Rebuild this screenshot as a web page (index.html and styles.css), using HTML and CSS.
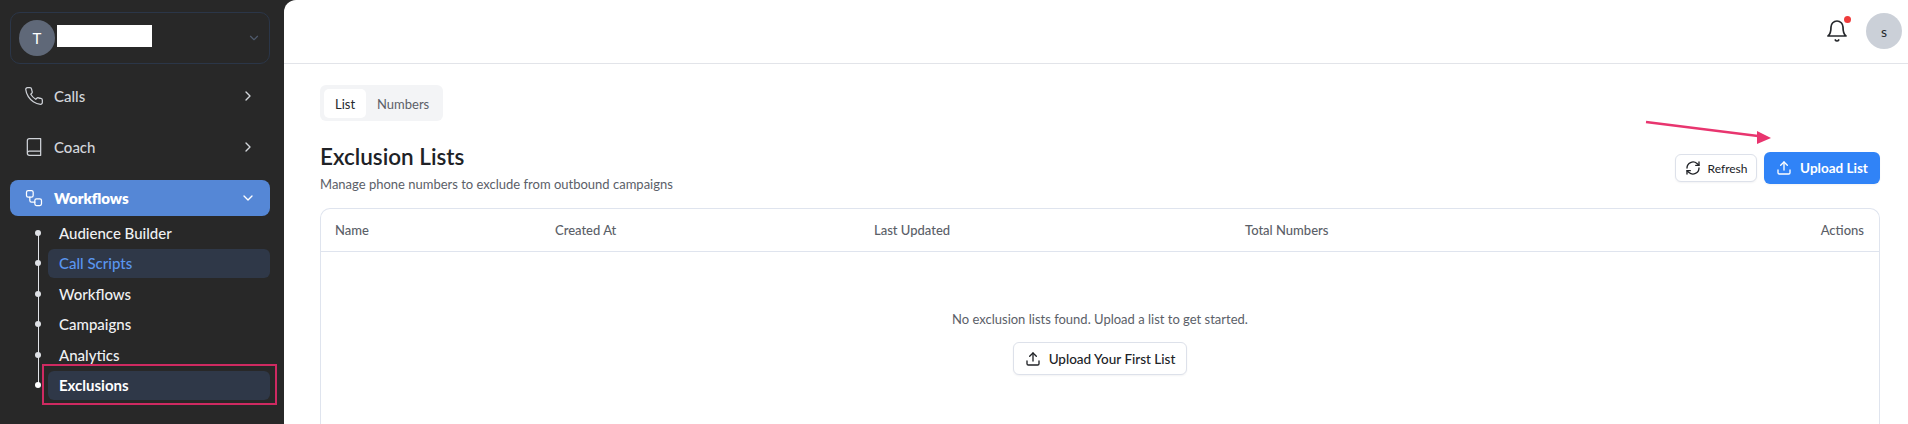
FILE: index.html
```html
<!DOCTYPE html>
<html lang="en">
<head>
<meta charset="utf-8">
<title>Exclusion Lists</title>
<link rel="stylesheet" href="styles.css">
</head>
<body>
<div class="app">
  <aside class="sidebar">
    <div class="switcher">
      <span class="org-avatar">T</span>
      <span class="redacted"></span>
      <svg class="switch-chev" viewBox="0 0 24 24"><path d="m6 9 6 6 6-6"/></svg>
    </div>
    <nav class="nav">
      <div class="nav-item">
        <svg class="nav-icon" viewBox="0 0 24 24"><path d="M22 16.92v3a2 2 0 0 1-2.18 2 19.79 19.79 0 0 1-8.63-3.07 19.5 19.5 0 0 1-6-6 19.79 19.79 0 0 1-3.07-8.67A2 2 0 0 1 4.11 2h3a2 2 0 0 1 2 1.72c.13.96.36 1.9.7 2.81a2 2 0 0 1-.45 2.11L8.09 9.91a16 16 0 0 0 6 6l1.27-1.27a2 2 0 0 1 2.11-.45c.91.34 1.85.57 2.81.7A2 2 0 0 1 22 16.92z"/></svg>
        <span class="nav-label">Calls</span>
        <svg class="nav-chev" viewBox="0 0 24 24"><path d="m9 6 6 6-6 6"/></svg>
      </div>
      <div class="nav-item">
        <svg class="nav-icon" viewBox="0 0 24 24"><path d="M4 19.5v-15A2.5 2.5 0 0 1 6.5 2H20v20H6.5a2.5 2.5 0 0 1 0-5H20"/></svg>
        <span class="nav-label">Coach</span>
        <svg class="nav-chev" viewBox="0 0 24 24"><path d="m9 6 6 6-6 6"/></svg>
      </div>
      <div class="nav-item nav-open">
        <svg class="nav-icon" viewBox="0 0 24 24"><rect x="3" y="3" width="8" height="8" rx="2"/><rect x="13" y="13" width="8" height="8" rx="2"/><path d="M7 11v4a2 2 0 0 0 2 2h4"/></svg>
        <span class="nav-label">Workflows</span>
        <svg class="nav-chev" viewBox="0 0 24 24"><path d="m6 9 6 6 6-6"/></svg>
      </div>
      <ul class="subnav">
        <li class="sub-item">Audience Builder</li>
        <li class="sub-item sub-link">Call Scripts</li>
        <li class="sub-item">Workflows</li>
        <li class="sub-item">Campaigns</li>
        <li class="sub-item">Analytics</li>
        <li class="sub-item sub-current">Exclusions<span class="callout"></span></li>
      </ul>
    </nav>
  </aside>
  <main class="main">
    <header class="topbar">
      <span class="bell">
        <svg viewBox="0 0 24 24"><path d="M6 8a6 6 0 0 1 12 0c0 7 3 9 3 9H3s3-2 3-9"/><path d="M10.3 21a1.94 1.94 0 0 0 3.4 0"/></svg>
        <span class="bell-dot"></span>
      </span>
      <span class="user-avatar">s</span>
    </header>
    <section class="content">
      <div class="tabs">
        <span class="tab tab-active">List</span>
        <span class="tab">Numbers</span>
      </div>
      <div class="page-head">
        <div>
          <h1 class="title">Exclusion Lists</h1>
          <p class="subtitle">Manage phone numbers to exclude from outbound campaigns</p>
        </div>
        <div class="actions">
          <svg class="arrow" viewBox="0 0 130 26"><path class="arrow-line" d="M1 2 113 16"/><path class="arrow-head" d="M126 18 112 11 112 24z"/></svg>
          <button class="btn btn-small">
            <svg class="btn-icon" viewBox="0 0 24 24"><path d="M3 12a9 9 0 0 1 15-6.7L21 8"/><path d="M21 3v5h-5"/><path d="M21 12a9 9 0 0 1-15 6.7L3 16"/><path d="M8 16H3v5"/></svg>
            Refresh
          </button>
          <button class="btn btn-primary">
            <svg class="btn-icon" viewBox="0 0 24 24"><path d="M21 15v4a2 2 0 0 1-2 2H5a2 2 0 0 1-2-2v-4"/><path d="m17 8-5-5-5 5"/><path d="M12 3v12"/></svg>
            Upload List
          </button>
        </div>
      </div>
      <div class="table">
        <div class="table-head">
          <span>Name</span>
          <span>Created At</span>
          <span>Last Updated</span>
          <span>Total Numbers</span>
          <span>Actions</span>
        </div>
        <div class="empty">
          <p class="empty-text">No exclusion lists found. Upload a list to get started.</p>
          <button class="btn btn-outline">
            <svg class="btn-icon" viewBox="0 0 24 24"><path d="M21 15v4a2 2 0 0 1-2 2H5a2 2 0 0 1-2-2v-4"/><path d="m17 8-5-5-5 5"/><path d="M12 3v12"/></svg>
            Upload Your First List
          </button>
        </div>
      </div>
    </section>
  </main>
</div>
</body>
</html>
```

FILE: styles.css
```css
* { box-sizing: border-box; }
html, body { margin: 0; height: 424px; overflow: hidden; }
body { font-family: Lato, "Noto Sans", sans-serif; background: #282828; color: #1f2023; }

.app { display: flex; height: 424px; overflow: hidden; }

.sidebar { width: 284px; flex: none; padding: 12px 14px 0 10px; background: #282828; }

.switcher {
  display: flex; align-items: center; height: 52px; padding: 0 8px;
  border: 1px solid #2b3648; border-radius: 10px;
}
.org-avatar {
  width: 36px; height: 36px; flex: none; display: flex; align-items: center; justify-content: center;
  border-radius: 50%; background: #5f6878; color: #fff; font-size: 15px;
}
.redacted { width: 95px; height: 22px; margin: -4px 0 0 2px; background: #fff; }
.switch-chev { width: 14px; height: 14px; margin-left: auto; fill: none; stroke: #4f5a6c; stroke-width: 2; stroke-linecap: round; stroke-linejoin: round; }

.nav { display: flex; flex-direction: column; margin-top: 13.5px; }
.nav-item {
  display: flex; align-items: center; height: 36px; padding: 0 14px; margin-bottom: 15px;
  border-radius: 8px; color: #d3d6db; font-size: 15px; font-weight: 500;
}
.nav-icon { width: 20px; height: 20px; flex: none; fill: none; stroke: #cfd2d8; stroke-width: 1.5; stroke-linecap: round; stroke-linejoin: round; }
.nav-label { margin-left: 10px; }
.nav-chev { width: 16px; height: 16px; margin-left: auto; fill: none; stroke: #d3d6db; stroke-width: 2; stroke-linecap: round; stroke-linejoin: round; }
.nav-open { margin-bottom: 1px; background: #5587d6; color: #fff; font-weight: 800; }
.nav-open .nav-icon, .nav-open .nav-chev { stroke: #fff; }

.subnav { position: relative; list-style: none; margin: 0; padding: 1.5px 0 0 38px; }
.subnav::before { content: ""; position: absolute; left: 27.5px; top: 16px; height: 150px; width: 1px; background: #e2e4e8; }
.sub-item {
  position: relative; height: 29px; display: flex; align-items: center; margin-bottom: 1.5px; padding-left: 11px;
  border-radius: 6px; color: #f0f1f3; font-size: 15px; font-weight: 500;
}
.sub-item::before {
  content: ""; position: absolute; left: -13px; top: 11.5px; width: 6px; height: 6px; border-radius: 50%; background: #dfe1e5;
}
.sub-link { background: #2f3848; color: #5a96ef; }
.sub-current { background: #2f3848; color: #fff; font-weight: 700; }
.sub-current::before { background: #fff; }
.callout { position: absolute; left: -6px; top: -6.5px; width: 235px; height: 41px; border: 2.5px solid #cf2a61; }

.main { flex: 1; min-width: 0; height: 424px; background: #fff; border-top-left-radius: 12px; overflow: hidden; }

.topbar {
  display: flex; align-items: center; justify-content: flex-end; gap: 17px; height: 64px; padding: 0 6px 1px 0;
  border-bottom: 1px solid #e2e4e9;
}
.bell { position: relative; width: 24px; height: 24px; }
.bell svg { width: 24px; height: 24px; display: block; fill: none; stroke: #26282c; stroke-width: 1.7; stroke-linecap: round; stroke-linejoin: round; }
.bell-dot { position: absolute; left: 18.5px; top: -3.5px; width: 7px; height: 7px; border-radius: 50%; background: #ef3b3b; }
.user-avatar { width: 36px; height: 36px; display: flex; align-items: center; justify-content: center; border-radius: 50%; background: #cbd0d8; color: #26282c; font-size: 14px; }

.content { padding: 21px 28px 0 36px; }

.tabs { display: flex; width: 123px; height: 36px; padding: 4px; border-radius: 6px; background: #f3f4f6; }
.tab { display: flex; align-items: center; height: 29px; padding: 0 11px; border-radius: 5px; color: #5b6068; font-size: 13px; }
.tab-active { width: 42px; background: #fff; color: #26282c; }

.page-head { display: flex; justify-content: space-between; align-items: flex-start; height: 67px; margin-top: 20px; }
.title { margin: 0; font-size: 22.5px; line-height: 31px; font-weight: 600; color: #202226; }
.subtitle { margin: 2px 0 0; font-size: 13px; line-height: 20px; color: #5b6068; }

.actions { position: relative; display: flex; align-items: center; gap: 7px; margin-top: 11px; }
.arrow { position: absolute; left: -30px; top: -32px; width: 130px; height: 26px; }
.arrow-line { fill: none; stroke: #e8356f; stroke-width: 2.4; }
.arrow-head { fill: #e8356f; }

.btn {
  display: inline-flex; align-items: center; justify-content: center; border-radius: 6px; border: 1px solid #dde1ea;
  background: #fff; color: #202226; font-family: inherit; font-size: 13.5px; font-weight: 500; box-shadow: 0 1px 2px rgba(16,24,40,.05);
}
.btn-icon { flex: none; width: 16px; height: 16px; fill: none; stroke: currentColor; stroke-width: 2; stroke-linecap: round; stroke-linejoin: round; }
.btn-small { width: 82px; height: 28px; gap: 7px; font-size: 12px; font-weight: 400; }
.btn-primary { width: 116px; height: 32px; gap: 8px; border: 0; background: #3083f7; color: #fff; font-size: 13.5px; font-weight: 700; }
.btn-outline { width: 174px; height: 33px; gap: 8px; }

.table { height: 216px; border: 1px solid #dfe4ee; border-bottom: 0; border-radius: 10px 10px 0 0; }
.table-head {
  display: grid; grid-template-columns: 220px 319px 371px 1fr auto; align-items: center; height: 43px; padding: 0 15px 0 14px;
  border-bottom: 1px solid #dfe4ee; color: #5b6068; font-size: 13px; font-weight: 500;
}
.empty { display: flex; flex-direction: column; align-items: center; padding-top: 57px; }
.empty-text { margin: 0 0 13px; font-size: 13px; line-height: 20px; color: #5b6068; }
```
